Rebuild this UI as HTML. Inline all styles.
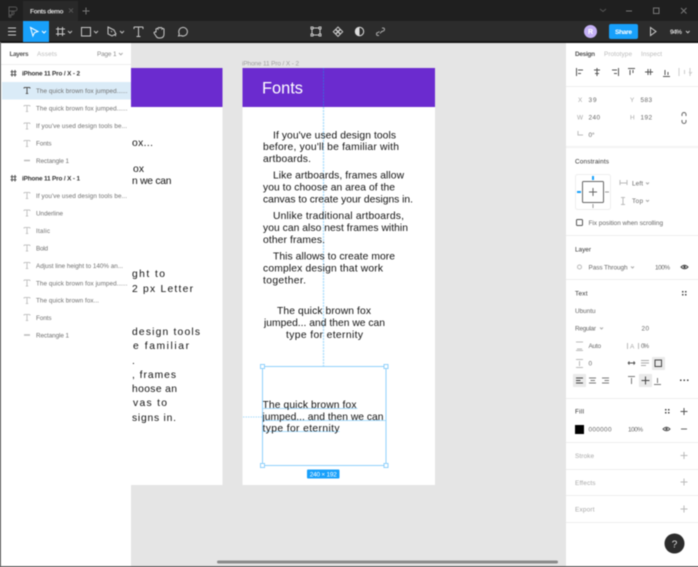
<!DOCTYPE html>
<html><head><meta charset="utf-8"><title>Fonts demo</title>
<style>
html,body{margin:0;padding:0;width:698px;height:567px;overflow:hidden;background:#e5e5e5}
svg{display:block}
#root{filter:blur(.4px)}
text{font-family:"Liberation Sans",Arial,sans-serif}
.u{font-size:10.3px;fill:#111}
.l{font-size:6.3px;fill:#6f6f6f}
.h{font-size:6.4px;fill:#333}
.m{font-size:6.4px;fill:#666}
.f{font-size:6.4px;fill:#a8a8a8}
.i{fill:none;stroke:#c8c8c8;stroke-width:1}
.d{fill:none;stroke:#555;stroke-width:1}
.g{fill:none;stroke:#bbb;stroke-width:1}
</style></head><body>
<svg width="698" height="567" viewBox="0 0 698 567" xmlns="http://www.w3.org/2000/svg">
<g id="root">
<rect x="-6" y="-6" width="710" height="579" fill="#e5e5e5"/>
<!-- title bar -->
<rect x="-6" y="-6" width="710" height="27" fill="#1f1f1f"/>
<rect x="23" y="1" width="55" height="20" fill="#292929"/>
<g fill="none" stroke="#555" stroke-width="1"><path d="M9 7h6a2 2 0 010 4h-6zM9 11h3v4h-3zM9 15a2 2 0 012 2 2 2 0 01-2 0zM12 11a2 2 0 110 4"/></g>
<text x="30" y="13.5" font-size="6.6" font-weight="bold" fill="#d5d5d5" textLength="33.5">Fonts demo</text>
<path d="M69 8.500l4 4M73 8.500l-4 4" stroke="#555" fill="none"/>
<path d="M86 7.500v7M82.500 11h7" stroke="#777" fill="none"/>
<path d="M600 9l3 2.500 3-2.500" stroke="#555" fill="none"/>
<path d="M626 11h6" stroke="#777" fill="none"/>
<rect x="653.500" y="8" width="5.500" height="5.500" stroke="#777" fill="none"/>
<path d="M681 8l5.500 5.500M686.500 8L681 13.500" stroke="#777" fill="none"/>
<!-- toolbar -->
<rect x="-6" y="21" width="710" height="20" fill="#2c2c2c"/>
<rect x="-6" y="41" width="710" height="2" fill="#161616"/>
<path d="M8 28h8M8 31.500h8M8 35h8" stroke="#ccc" fill="none"/>
<rect x="23" y="21" width="26" height="21" fill="#18a0fb"/>
<path d="M30.500 27.500l7.500 4-3.500 1.200-1.600 3.300z" fill="none" stroke="#fff"/>
<path d="M42 31l2 2 2-2" stroke="#fff" fill="none"/>
<path d="M58 27v9M62.500 27v9M56 29h9M56 34h9" class="i" stroke-width="1.400"/>
<path d="M68 31l2 2 2-2M94 31l2 2 2-2M120 31l2 2 2-2" stroke="#bbb" fill="none"/>
<rect x="81.500" y="27.500" width="9" height="8.500" class="i"/>
<path d="M108 27l6 3 2 4-4 2-4-2zM111 31l1 1M116 36l-1-1" class="i"/>
<path d="M134 27h9M134 27v2M143 27v2M138.500 27v9.500M136.500 36.500h4" class="i"/>
<path d="M156 32v-3q1-1 2 0v-1q1-1 2 0v0q1-1 2 0v1q1-1 2 0v5q0 4-4 4h-1q-2 0-3-2l-2-3q0-1 1-1z" class="i" stroke-width="1.100"/>
<path d="M178.500 36l.8-2.200a4.300 4.300 0 111.700 1.700z" class="i"/>
<path d="M313 28h6M313 35h6M312 29v5M320 29v5" stroke="#c8c8c8" fill="none"/>
<g fill="#2c2c2c" stroke="#c8c8c8"><rect x="311" y="27" width="2" height="2"/><rect x="319" y="27" width="2" height="2"/><rect x="311" y="34" width="2" height="2"/><rect x="319" y="34" width="2" height="2"/></g>
<path d="M338 27l2.200 2.200-2.200 2.200-2.200-2.200zM338 32l2.200 2.200-2.200 2.200-2.200-2.200zM335.500 29.500l2.200 2.200-2.200 2.200-2.200-2.200zM340.500 29.500l2.200 2.200-2.200 2.200-2.200-2.200z" class="i"/>
<circle cx="359.500" cy="31.500" r="4.200" fill="none" stroke="#ddd"/>
<path d="M359.500 27.300a4.200 4.200 0 000 8.400z" fill="#ddd"/>
<path d="M379 35.500l-1 0a1.500 1.500 0 010-3l1.500-1M382 28l1 0a1.500 1.500 0 010 3l-1.500 1M380 33.500l2-2.500" stroke="#aaa" fill="none"/>
<circle cx="590.500" cy="31.500" r="6.500" fill="#c4b0f5"/>
<text x="590.500" y="34" font-size="7" fill="#fff" text-anchor="middle" font-weight="bold">R</text>
<rect x="609" y="24" width="29" height="15" rx="2" fill="#18a0fb"/>
<text x="615" y="34" font-size="6.600" font-weight="bold" fill="#fff" textLength="17">Share</text>
<path d="M650.500 27.500l5.500 4-5.500 4z" fill="none" stroke="#ccc"/>
<text x="670" y="34" font-size="6.600" font-weight="bold" fill="#ccc" textLength="12">94%</text>
<path d="M686 31l1.800 1.800 1.800-1.800" stroke="#ccc" fill="none"/>

<!-- left artboard -->
<rect x="131" y="68" width="91.500" height="417" fill="#fff"/>
<rect x="131" y="68" width="91.500" height="39" fill="#6b2bcf"/>
<text class="u" x="132" y="146" textLength="21">ox...</text>
<text class="u" x="133" y="172" textLength="11">ox</text>
<text class="u" x="132" y="184" textLength="39.500">n we can</text>
<text class="u" x="132" y="277" textLength="33">ght to</text>
<text class="u" x="132" y="292" textLength="61">2 px Letter</text>
<text class="u" x="132" y="335" textLength="68">design tools</text>
<text class="u" x="133" y="349" textLength="56">e familiar</text>
<text class="u" x="132" y="364">.</text>
<text class="u" x="132" y="378" textLength="44">, frames</text>
<text class="u" x="132" y="392" textLength="45">hoose an</text>
<text class="u" x="133" y="406" textLength="34">vas to</text>
<text class="u" x="132" y="421" textLength="44">signs in.</text>

<!-- right artboard -->
<text x="242" y="65.500" font-size="6.400" fill="#a0a0a0" textLength="57">iPhone 11 Pro / X - 2</text>
<rect x="242.500" y="68" width="192.500" height="417" fill="#fff"/>
<rect x="242.500" y="68" width="192.500" height="39" fill="#6b2bcf"/>
<path d="M323.500 68v39" stroke="#3f63dc" stroke-width="1" stroke-dasharray="2 1"/>
<path d="M323.500 107v259" stroke="#a8dcfd" stroke-width="1.300" stroke-dasharray="2 1"/>
<path d="M243 417h19" stroke="#a8dcfd" stroke-width="1" stroke-dasharray="1.500 1"/>
<text x="262" y="93.500" font-size="16.400" fill="#fff" textLength="41">Fonts</text>
<text class="u" x="273" y="138.500" textLength="123">If you've used design tools</text>
<text class="u" x="263" y="150" textLength="136">before, you'll be familiar with</text>
<text class="u" x="263" y="162" textLength="48">artboards.</text>
<text class="u" x="273" y="178.500" textLength="131">Like artboards, frames allow</text>
<text class="u" x="263" y="190.500" textLength="132">you to choose an area of the</text>
<text class="u" x="263" y="202.500" textLength="150">canvas to create your designs in.</text>
<text class="u" x="273" y="219" textLength="131">Unlike traditional artboards,</text>
<text class="u" x="263" y="231" textLength="145">you can also nest frames within</text>
<text class="u" x="263" y="243" textLength="62">other frames.</text>
<text class="u" x="273" y="259.500" textLength="122">This allows to create more</text>
<text class="u" x="263" y="271.500" textLength="120">complex design that work</text>
<text class="u" x="263" y="283.500" textLength="43">together.</text>
<text class="u" x="277" y="314" textLength="94">The quick brown fox</text>
<text class="u" x="264" y="326" textLength="121">jumped... and then we can</text>
<text class="u" x="286" y="338" textLength="77">type for eternity</text>
<!-- selection -->
<path d="M262.500 408.500h95M262.500 420.500h123.500M262.500 431.500h77" stroke="#a8dcfd" stroke-width="1"/>
<text class="u" x="262.500" y="408" textLength="94">The quick brown fox</text>
<text class="u" x="262.500" y="420" textLength="121">jumped... and then we can</text>
<text class="u" x="262.500" y="431.500" textLength="77">type for eternity</text>
<rect x="262.500" y="366.500" width="123.500" height="99" fill="none" stroke="#8fd0fb" stroke-width="1"/>
<g fill="#fff" stroke="#8fd0fb"><rect x="260.500" y="364.500" width="4" height="4"/><rect x="384" y="364.500" width="4" height="4"/><rect x="260.500" y="463.500" width="4" height="4"/><rect x="384" y="463.500" width="4" height="4"/></g>
<rect x="307" y="469.500" width="32.500" height="9" rx="1" fill="#18a0fb"/>
<text x="309.800" y="476.300" font-size="6.400" fill="#fff" textLength="27">240 × 192</text>
<!-- scrollbar -->
<rect x="217" y="560.500" width="341" height="3" rx="1.500" fill="#8a8a8a"/>

<!-- layers panel -->
<rect x="1" y="43" width="130" height="524" fill="#fff"/>
<path d="M1 64.500h130" stroke="#eee"/>
<text x="9.500" y="56" font-size="6.400" font-weight="bold" fill="#555" textLength="19">Layers</text>
<text x="37" y="56" font-size="6.400" fill="#bbb" textLength="20">Assets</text>
<text x="97" y="56" font-size="6.400" fill="#888" textLength="19.500">Page 1</text>
<path d="M119 53l1.800 1.800 1.800-1.800" stroke="#aaa" fill="none"/>
<rect x="2" y="82" width="129" height="17.500" fill="#daebf7"/>
<g id="frames" stroke="#555" fill="none"><path d="M12 70v6.500M15 70v6.500M10.500 71.800h6M10.500 74.800h6M12 175v6.500M15 175v6.500M10.500 176.800h6M10.500 179.800h6"/></g>
<text x="22" y="75.500" class="h" font-weight="bold" textLength="58">iPhone 11 Pro / X - 2</text>
<text x="22" y="180.500" class="h" font-weight="bold" textLength="58">iPhone 11 Pro / X - 1</text>
<!-- T icons -->
<g fill="none" stroke="#c4c4c4">
<path d="M24 105.500h6M24 105.500v1M30 105.500v1M27 105.500v6M25.800 111.500h2.400"/>
<path d="M24 123h6M24 123v1M30 123v1M27 123v6M25.800 129h2.400"/>
<path d="M24 140.500h6M24 140.500v1M30 140.500v1M27 140.500v6M25.800 146.500h2.400"/>
<path d="M24 192.500h6M24 192.500v1M30 192.500v1M27 192.500v6M25.800 198.500h2.400"/>
<path d="M24 210h6M24 210v1M30 210v1M27 210v6M25.800 216h2.400"/>
<path d="M24 227.500h6M24 227.500v1M30 227.500v1M27 227.500v6M25.800 233.500h2.400"/>
<path d="M24 245h6M24 245v1M30 245v1M27 245v6M25.800 251h2.400"/>
<path d="M24 262.500h6M24 262.500v1M30 262.500v1M27 262.500v6M25.800 268.500h2.400"/>
<path d="M24 280h6M24 280v1M30 280v1M27 280v6M25.800 286h2.400"/>
<path d="M24 297.500h6M24 297.500v1M30 297.500v1M27 297.500v6M25.800 303.500h2.400"/>
<path d="M24 314.500h6M24 314.500v1M30 314.500v1M27 314.500v6M25.800 320.500h2.400"/>
</g>
<path d="M24 87.500h6M24 87.500v1M30 87.500v1M27 87.500v6M25.800 93.500h2.400" fill="none" stroke="#555"/>
<path d="M24 160.500h6M24 335h6" stroke="#bbb" stroke-width="1.400"/>
<text class="l" x="36" y="93" textLength="91.500">The quick brown fox jumped......</text>
<text class="l" x="36" y="110.500" textLength="91.500">The quick brown fox jumped......</text>
<text class="l" x="36" y="128" textLength="91">If you've used design tools be...</text>
<text class="l" x="36" y="145.500" textLength="15.500">Fonts</text>
<text class="l" x="36" y="163" textLength="33">Rectangle 1</text>
<text class="l" x="36" y="198" textLength="91">If you've used design tools be...</text>
<text class="l" x="36" y="215.500" textLength="27">Underline</text>
<text class="l" x="36" y="233" textLength="14">Italic</text>
<text class="l" x="36" y="250.500" textLength="12">Bold</text>
<text class="l" x="36" y="268" textLength="87">Adjust line height to 140% an...</text>
<text class="l" x="36" y="285.500" textLength="91.500">The quick brown fox jumped......</text>
<text class="l" x="36" y="302.500" textLength="63">The quick brown fox...</text>
<text class="l" x="36" y="320" textLength="15.500">Fonts</text>
<text class="l" x="36" y="337.500" textLength="33">Rectangle 1</text>

<!-- right panel -->
<rect x="566" y="43" width="138" height="530" fill="#fff"/>
<text x="575" y="56" font-size="6.400" font-weight="bold" fill="#555" textLength="20">Design</text>
<text x="604" y="56" font-size="6.400" fill="#bbb" textLength="28">Prototype</text>
<text x="641" y="56" font-size="6.400" fill="#bbb" textLength="21">Inspect</text>
<path d="M566 86.500h138M566 235.500h138M566 279.500h138M566 398.500h138M566 442.500h138M566 469.500h138M566 495.500h138M566 522.500h138" stroke="#eee"/>
<rect x="566" y="146" width="138" height="2" fill="#f3f3f3"/>
<!-- align icons -->
<path class="d" d="M576.500 68v8M578 70h5M578 73.500h3"/>
<path class="d" d="M597 68v8M594 70h6M595 73.500h4"/>
<path class="d" d="M618.500 68v8M612 70h5M614 73.500h3"/>
<path class="d" d="M628 68.500h7M630 70v5M633 70v3"/>
<path class="d" d="M645 72h8M648 69v6M650.500 69v6"/>
<path class="d" d="M663 76.500h7M665 70v5M668 72v3"/>
<path d="M679 68v8M690 68v8M684.500 70v4" stroke="#ccc" fill="none"/>
<path d="M689 72l1.500 1.500 1.500-1.500" stroke="#ccc" fill="none"/>
<!-- xywh -->
<text class="f" x="578" y="102">X</text><text class="m" x="588.500" y="102" textLength="8">39</text>
<text class="f" x="630" y="102">Y</text><text class="m" x="640.500" y="102" textLength="11.500">583</text>
<text class="f" x="577" y="119.500">W</text><text class="m" x="588.500" y="119.500" textLength="11.500">240</text>
<text class="f" x="630" y="119.500">H</text><text class="m" x="640.500" y="119.500" textLength="11.500">192</text>
<path d="M578 131v4h5" stroke="#bbb" fill="none"/><text class="m" x="588.500" y="137">0°</text>
<path d="M682 116v-1.500a2 2 0 014 0V116M682 120v1.500a2 2 0 004 0V120" stroke="#666" fill="none"/>
<!-- constraints -->
<text x="575" y="163.500" class="h" textLength="34">Constraints</text>
<rect x="575.500" y="174.500" width="35" height="35" rx="2" fill="#fff" stroke="#eee"/>
<rect x="582.500" y="181.500" width="21" height="21" rx="1" fill="none" stroke="#666"/>
<path d="M593 188v8M589 192h8" stroke="#666" fill="none"/>
<path d="M593 176v4" stroke="#18a0fb" stroke-width="2"/>
<path d="M577 192h4" stroke="#18a0fb" stroke-width="2"/>
<path d="M605 192h4M593 204v4" stroke="#999" stroke-width="1"/>
<path d="M620 180v5M627 180v5M620 183h7" stroke="#bbb" fill="none"/>
<text class="m" x="632" y="185.500" textLength="11">Left</text>
<path d="M646 182.500l1.500 1.500 1.500-1.500M646 200l1.500 1.500 1.500-1.500" stroke="#aaa" fill="none"/>
<path d="M621 197.500h4M621 204.500h4M623 197.500v7" stroke="#bbb" fill="none"/>
<text class="m" x="632" y="203" textLength="11">Top</text>
<rect x="576.500" y="219.500" width="6" height="6" rx="1" fill="none" stroke="#555"/>
<text class="m" x="588.500" y="225" textLength="74.500">Fix position when scrolling</text>
<!-- layer -->
<text x="575" y="251.500" class="h" textLength="16">Layer</text>
<circle cx="579.500" cy="267" r="2" fill="none" stroke="#bbb"/>
<text class="m" x="588.500" y="269.500" textLength="39">Pass Through</text>
<path d="M631 266.500l1.500 1.500 1.500-1.500" stroke="#aaa" fill="none"/>
<text class="m" x="655" y="269.500" textLength="15">100%</text>
<path d="M681 267q3.500-3.500 7 0-3.500 3.500-7 0z" fill="none" stroke="#444"/><circle cx="684.500" cy="267" r="1.200" fill="#444"/>
<!-- text -->
<text x="575" y="295.500" class="h" textLength="12.500">Text</text>
<g fill="#444"><rect x="682" y="291" width="1.500" height="1.500"/><rect x="685" y="291" width="1.500" height="1.500"/><rect x="682" y="294" width="1.500" height="1.500"/><rect x="685" y="294" width="1.500" height="1.500"/></g>
<text class="m" x="575" y="313" textLength="20.500">Ubuntu</text>
<text class="m" x="575" y="330.500" textLength="21">Regular</text>
<path d="M600 327.500l1.500 1.500 1.500-1.500" stroke="#aaa" fill="none"/>
<text class="m" x="641.500" y="330.500" textLength="7.500">20</text>
<path d="M576 342h7M577 349h5M576 350.500h7" stroke="#bbb" fill="none"/>
<text class="m" x="588.500" y="348" textLength="12.500">Auto</text>
<path d="M627.500 343v6M638.500 343v6" stroke="#bbb" fill="none"/><text class="f" x="630" y="348.500">A</text>
<text class="m" x="641" y="348" textLength="8">0%</text>
<path d="M576 359.500h7M579.500 361v5M576 367.500h7" stroke="#bbb" fill="none"/>
<text class="m" x="588.500" y="365.500">0</text>
<path d="M628 363h7M628 363l1.500-1.500M628 363l1.500 1.500M635 363l-1.500-1.500M635 363l-1.500 1.500" stroke="#555" fill="none"/>
<path d="M641 360.500h8M641 363h8M641 365.500h5" stroke="#aaa" fill="none"/>
<rect x="652" y="357" width="13" height="13" fill="#eaeaea"/>
<rect x="655" y="360" width="6.500" height="6.500" fill="none" stroke="#444"/>
<rect x="573" y="374" width="13" height="13" fill="#eaeaea"/>
<rect x="639" y="374" width="13" height="13" fill="#eaeaea"/>
<path d="M576 378h7M576 380.500h4.500M576 383h7" stroke="#444" fill="none"/>
<path d="M589 378h7M590.500 380.500h4.500M589 383h7" stroke="#777" fill="none"/>
<path d="M602 378h7M604.500 380.500h4.500M602 383h7" stroke="#777" fill="none"/>
<path d="M628 376.500h7M631.500 378v6" stroke="#777" fill="none"/>
<path d="M641.500 380.500h8M645.500 376.500v8" stroke="#444" fill="none"/>
<path d="M654 384.500h7M657.500 378v5" stroke="#777" fill="none"/>
<g fill="#444"><rect x="680" y="379.500" width="1.500" height="1.500"/><rect x="683.500" y="379.500" width="1.500" height="1.500"/><rect x="687" y="379.500" width="1.500" height="1.500"/></g>
<!-- fill -->
<text x="575" y="413.500" class="h" textLength="9">Fill</text>
<g fill="#444"><rect x="665" y="409" width="1.500" height="1.500"/><rect x="668" y="409" width="1.500" height="1.500"/><rect x="665" y="412" width="1.500" height="1.500"/><rect x="668" y="412" width="1.500" height="1.500"/></g>
<path d="M684 408v7M680.500 411.500h7" stroke="#555" fill="none"/>
<rect x="575" y="425" width="9" height="9" fill="#000"/>
<text class="m" x="588.500" y="431.500" textLength="23">000000</text>
<text class="m" x="628" y="431.500" textLength="15">100%</text>
<path d="M663 429q3.500-3.500 7 0-3.500 3.500-7 0z" fill="none" stroke="#555"/><circle cx="666.500" cy="429" r="1.200" fill="#555"/>
<path d="M681 429h6" stroke="#666" fill="none"/>
<text class="f" x="575" y="458" textLength="19">Stroke</text>
<text class="f" x="575" y="485" textLength="20.500">Effects</text>
<text class="f" x="575" y="511.500" textLength="19.500">Export</text>
<path d="M684 452v7M680.500 455.500h7M684 478.500v7M680.500 482h7M684 505.500v7M680.500 509h7" class="g"/>
<circle cx="674.500" cy="543.500" r="10" fill="#2c2c2c"/>
<text x="674.500" y="547.500" font-size="10" fill="#ddd" text-anchor="middle">?</text>
<!-- window border -->
<rect x="-6" y="42" width="7" height="531" fill="#6b6b6b"/>
<rect x="-6" y="566" width="710" height="7" fill="#6b6b6b"/>
</g>
</svg>
</body></html>
